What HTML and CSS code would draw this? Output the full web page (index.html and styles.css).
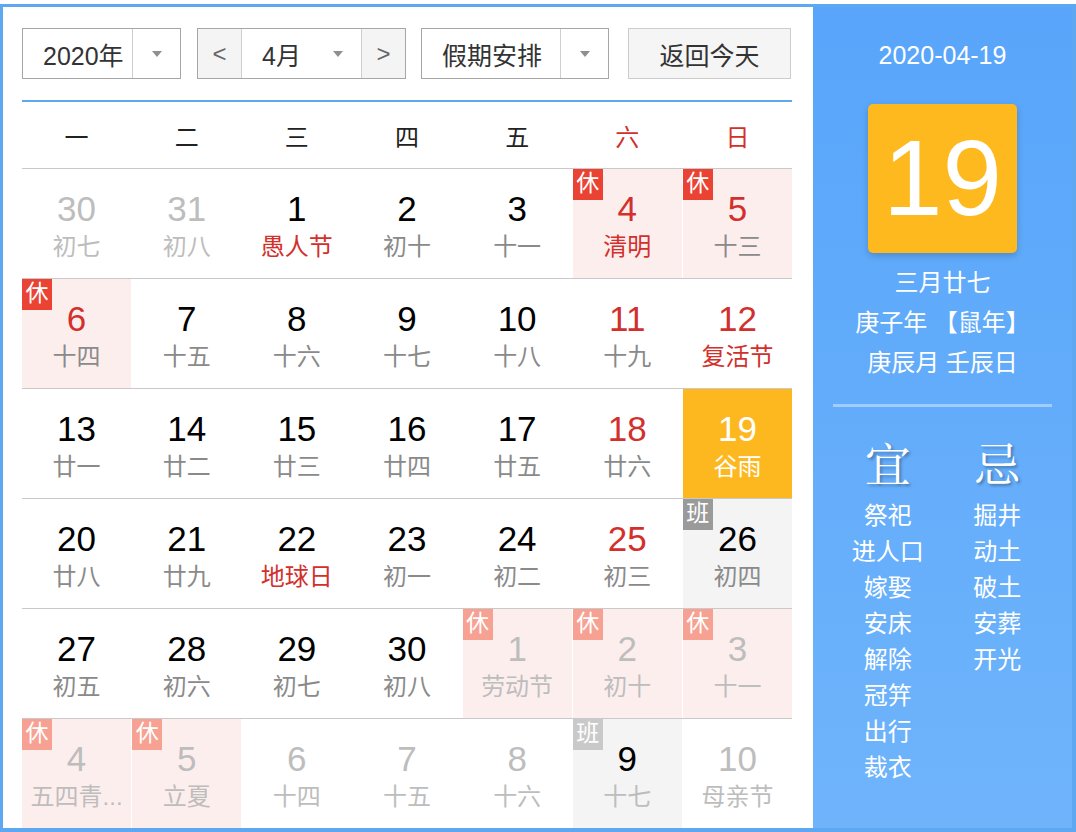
FILE: index.html
```html
<!DOCTYPE html>
<html lang="zh-CN">
<head>
<meta charset="utf-8">
<title>万年历</title>
<link rel="stylesheet" href="styles.css">
</head>
<body>
<div class="app">
  <div class="main">
    <div class="toolbar">
      <div class="sel sel-year">
        <div class="sel-text">2020年</div>
        <div class="sel-arrow"><span class="tri"></span></div>
      </div>
      <div class="sel sel-month">
        <div class="nav nav-prev">&lt;</div>
        <div class="sel-text">4月</div>
        <div class="sel-arrow plain"><span class="tri"></span></div>
        <div class="nav nav-next">&gt;</div>
      </div>
      <div class="sel sel-holiday">
        <div class="sel-text">假期安排</div>
        <div class="sel-arrow"><span class="tri"></span></div>
      </div>
      <div class="btn-today">返回今天</div>
    </div>
    <div class="line"></div>
    <div class="weekhead">
      <div>一</div><div>二</div><div>三</div><div>四</div><div>五</div><div class="red">六</div><div class="red">日</div>
    </div>
    <div class="weeks">
      <div class="week">
        <div class="cell other"><div class="num">30</div><div class="lunar">初七</div></div>
        <div class="cell other"><div class="num">31</div><div class="lunar">初八</div></div>
        <div class="cell"><div class="num">1</div><div class="lunar red">愚人节</div></div>
        <div class="cell"><div class="num">2</div><div class="lunar">初十</div></div>
        <div class="cell"><div class="num">3</div><div class="lunar">十一</div></div>
        <div class="cell rest"><span class="badge">休</span><div class="num red">4</div><div class="lunar red">清明</div></div>
        <div class="cell rest"><span class="badge">休</span><div class="num red">5</div><div class="lunar">十三</div></div>
      </div>
      <div class="week">
        <div class="cell rest"><span class="badge">休</span><div class="num red">6</div><div class="lunar">十四</div></div>
        <div class="cell"><div class="num">7</div><div class="lunar">十五</div></div>
        <div class="cell"><div class="num">8</div><div class="lunar">十六</div></div>
        <div class="cell"><div class="num">9</div><div class="lunar">十七</div></div>
        <div class="cell"><div class="num">10</div><div class="lunar">十八</div></div>
        <div class="cell"><div class="num red">11</div><div class="lunar">十九</div></div>
        <div class="cell"><div class="num red">12</div><div class="lunar red">复活节</div></div>
      </div>
      <div class="week">
        <div class="cell"><div class="num">13</div><div class="lunar">廿一</div></div>
        <div class="cell"><div class="num">14</div><div class="lunar">廿二</div></div>
        <div class="cell"><div class="num">15</div><div class="lunar">廿三</div></div>
        <div class="cell"><div class="num">16</div><div class="lunar">廿四</div></div>
        <div class="cell"><div class="num">17</div><div class="lunar">廿五</div></div>
        <div class="cell"><div class="num red">18</div><div class="lunar">廿六</div></div>
        <div class="cell today"><div class="num">19</div><div class="lunar">谷雨</div></div>
      </div>
      <div class="week">
        <div class="cell"><div class="num">20</div><div class="lunar">廿八</div></div>
        <div class="cell"><div class="num">21</div><div class="lunar">廿九</div></div>
        <div class="cell"><div class="num">22</div><div class="lunar red">地球日</div></div>
        <div class="cell"><div class="num">23</div><div class="lunar">初一</div></div>
        <div class="cell"><div class="num">24</div><div class="lunar">初二</div></div>
        <div class="cell"><div class="num red">25</div><div class="lunar">初三</div></div>
        <div class="cell work"><span class="badge">班</span><div class="num">26</div><div class="lunar">初四</div></div>
      </div>
      <div class="week">
        <div class="cell"><div class="num">27</div><div class="lunar">初五</div></div>
        <div class="cell"><div class="num">28</div><div class="lunar">初六</div></div>
        <div class="cell"><div class="num">29</div><div class="lunar">初七</div></div>
        <div class="cell"><div class="num">30</div><div class="lunar">初八</div></div>
        <div class="cell rest other"><span class="badge">休</span><div class="num">1</div><div class="lunar">劳动节</div></div>
        <div class="cell rest other"><span class="badge">休</span><div class="num">2</div><div class="lunar">初十</div></div>
        <div class="cell rest other"><span class="badge">休</span><div class="num">3</div><div class="lunar">十一</div></div>
      </div>
      <div class="week">
        <div class="cell rest other"><span class="badge">休</span><div class="num">4</div><div class="lunar">五四青...</div></div>
        <div class="cell rest other"><span class="badge">休</span><div class="num">5</div><div class="lunar">立夏</div></div>
        <div class="cell other"><div class="num">6</div><div class="lunar">十四</div></div>
        <div class="cell other"><div class="num">7</div><div class="lunar">十五</div></div>
        <div class="cell other"><div class="num">8</div><div class="lunar">十六</div></div>
        <div class="cell work other"><span class="badge">班</span><div class="num dark">9</div><div class="lunar">十七</div></div>
        <div class="cell other"><div class="num">10</div><div class="lunar">母亲节</div></div>
      </div>
    </div>
  </div>
  <div class="side">
    <div class="side-date">2020-04-19</div>
    <div class="side-day">19</div>
    <div class="side-info">
      <div>三月廿七</div>
      <div>庚子年 【鼠年】</div>
      <div>庚辰月 壬辰日</div>
    </div>
    <div class="side-divider"></div>
    <div class="yiji">
      <div class="yiji-col">
        <div class="yiji-title">宜</div>
        <div class="yiji-item">祭祀</div>
        <div class="yiji-item">进人口</div>
        <div class="yiji-item">嫁娶</div>
        <div class="yiji-item">安床</div>
        <div class="yiji-item">解除</div>
        <div class="yiji-item">冠笄</div>
        <div class="yiji-item">出行</div>
        <div class="yiji-item">裁衣</div>
      </div>
      <div class="yiji-col">
        <div class="yiji-title">忌</div>
        <div class="yiji-item">掘井</div>
        <div class="yiji-item">动土</div>
        <div class="yiji-item">破土</div>
        <div class="yiji-item">安葬</div>
        <div class="yiji-item">开光</div>
      </div>
    </div>
  </div>
</div>
</body>
</html>
```
FILE: styles.css
```css
body {
  margin: 0;
  background: #fff;
  font-family: "Liberation Sans", "Noto Sans CJK SC", sans-serif;
}

.app {
  margin-top: 4px;
  width: 1076px;
  height: 828px;
  box-sizing: border-box;
  border-style: solid;
  border-color: #5ea8f2;
  border-width: 3px 4px 4px 3px;
  display: flex;
}

.main {
  width: 810px;
  box-sizing: border-box;
  padding: 21px 21px 0 19px;
  background: #fff;
}

/* toolbar */
.toolbar {
  display: flex;
  height: 51px;
  font-size: 25px;
  color: #333;
}

.sel {
  display: flex;
  height: 51px;
  box-sizing: border-box;
  border: 1px solid #a6a6a6;
  background: #fff;
}

.sel-text {
  flex: 1;
  display: flex;
  align-items: center;
  padding-left: 20px;
}

.sel-arrow {
  width: 47px;
  border-left: 1px solid #cfcfcf;
  display: flex;
  align-items: center;
  justify-content: center;
}

.sel-arrow.plain {
  border-left: none;
}

.tri {
  width: 0;
  height: 0;
  border-left: 5px solid transparent;
  border-right: 5px solid transparent;
  border-top: 6px solid #8f8f8f;
}

.sel-year {
  width: 159px;
}

.sel-month {
  width: 209px;
  margin-left: 16px;
}

.sel-month .sel-text {
  padding-left: 20px;
}

.nav {
  width: 43px;
  background: #f4f4f4;
  display: flex;
  align-items: center;
  justify-content: center;
  color: #666;
  font-size: 24px;
}

.nav-prev {
  border-right: 1px solid #cfcfcf;
}

.nav-next {
  border-left: 1px solid #cfcfcf;
}

.sel-holiday {
  width: 188px;
  margin-left: 15px;
}

.btn-today {
  width: 163px;
  height: 51px;
  margin-left: 19px;
  box-sizing: border-box;
  border: 1px solid #cccccc;
  background: #f5f5f5;
  display: flex;
  align-items: center;
  justify-content: center;
}

.line {
  margin-top: 21px;
  height: 2px;
  background: #5ea8ee;
}

.weekhead {
  height: 66px;
  display: grid;
  grid-template-columns: repeat(7, 1fr);
  column-gap: 1px;
  align-items: center;
  text-align: center;
  font-size: 24px;
  color: #222;
}

.red {
  color: #d2302c;
}

.week {
  height: 110px;
  box-sizing: border-box;
  border-top: 1px solid #c9c9c9;
  display: grid;
  grid-template-columns: repeat(7, 1fr);
  column-gap: 1px;
}

.cell {
  position: relative;
  text-align: center;
  padding-top: 21px;
  box-sizing: border-box;
}

.num {
  font-size: 35px;
  line-height: 38px;
  color: #000;
}

.lunar {
  margin-top: 4px;
  font-size: 24px;
  line-height: 30px;
  color: #8a8a8a;
  white-space: nowrap;
}

.num.red,
.lunar.red {
  color: #d2302c;
}

.cell.rest {
  background: #fdeeee;
}

.cell.work {
  background: #f4f4f4;
}

.badge {
  position: absolute;
  left: 0;
  top: 0;
  width: 30px;
  height: 31px;
  line-height: 29px;
  font-size: 23px;
  color: #fff;
  text-align: center;
}

.rest .badge {
  background: #ea4334;
}

.work .badge {
  background: #9a9a9a;
}

.cell.other .num,
.cell.other .lunar {
  color: #bdbdbd;
}

.cell.other .num.dark {
  color: #000;
}

.rest.other .badge {
  background: #f7a193;
}

.work.other .badge {
  background: #c9c9c9;
}

.cell.today {
  background: #fdb81f;
}

.cell.today .num,
.cell.today .lunar {
  color: #fff;
}

/* side panel */
.side {
  flex: 1;
  background: linear-gradient(#58a5fb, #6fb4fb);
  color: #fff;
  display: flex;
  flex-direction: column;
  align-items: center;
}

.side-date {
  margin-top: 33px;
  font-size: 25px;
  line-height: 30px;
}

.side-day {
  margin-top: 34px;
  width: 149px;
  height: 149px;
  border-radius: 5px;
  background: #fdb91e;
  box-shadow: 0 3px 7px rgba(0, 0, 0, 0.18);
  text-align: center;
  font-size: 107px;
  line-height: 149px;
}

.side-info {
  margin-top: 10px;
  text-align: center;
  font-size: 24px;
  line-height: 40px;
}

.side-divider {
  margin-top: 21px;
  width: 219px;
  height: 3px;
  background: rgba(255, 255, 255, 0.4);
}

.yiji {
  margin-top: 24px;
  width: 219px;
  display: flex;
}

.yiji-col {
  flex: 1;
  text-align: center;
}

.yiji-title {
  font-family: "Noto Serif CJK SC", "Noto Sans CJK SC", serif;
  font-size: 46px;
  line-height: 60px;
  margin-bottom: 7px;
  text-shadow: 2px 2px 3px rgba(0, 0, 0, 0.3);
}

.yiji-item {
  font-size: 24px;
  line-height: 36px;
}
```
